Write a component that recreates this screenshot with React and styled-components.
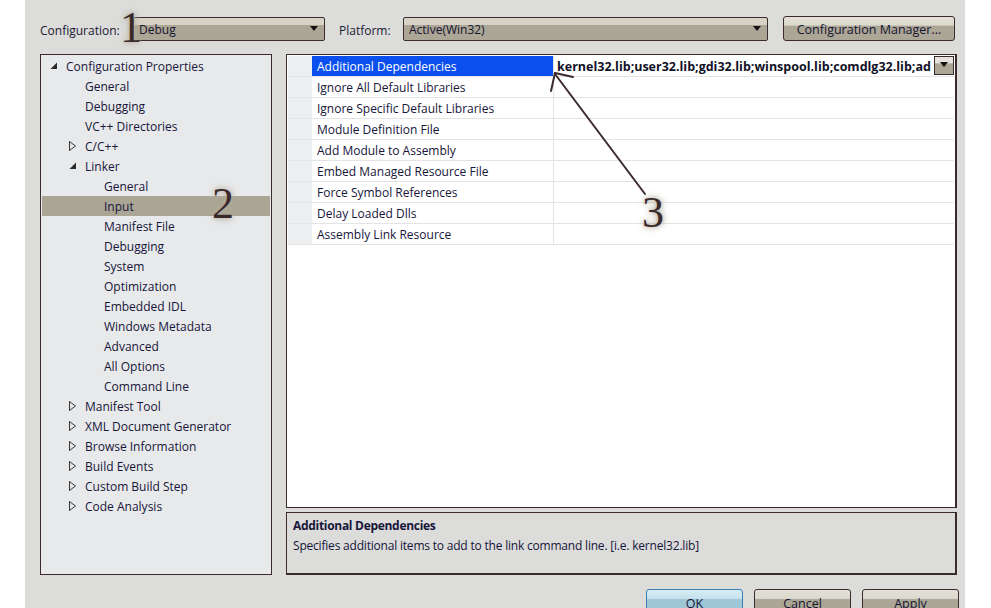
import React from 'react';
import styled, { createGlobalStyle } from 'styled-components';

const GlobalStyle = createGlobalStyle`
  html, body {
    margin: 0;
    padding: 0;
    background: #ffffff;
  }
  body {
    font-family: 'Open Sans', 'Noto Sans', sans-serif;
    font-size: 12px;
    color: #14143a;
  }
`;

const DARK = '#3b2a2e';

const Window = styled.div`
  position: relative;
  margin-left: 25px;
  width: 940px;
  height: 608px;
  overflow: hidden;
  background: #dcdcda;
  display: flex;
  flex-direction: column;
  padding: 16px 8px 0 15px;
  box-sizing: border-box;
  & > * {
    flex-shrink: 0;
  }
`;

const TopBar = styled.div`
  display: flex;
  align-items: center;
  height: 25px;
`;

const Label = styled.span`
  width: ${(p) => p.w}px;
  padding-top: 3px;
  color: #1a1a33;
  white-space: nowrap;
`;

const Combo = styled.div`
  width: ${(p) => p.w}px;
  height: 24px;
  box-sizing: border-box;
  border: 1px solid ${DARK};
  border-radius: 2px;
  background: linear-gradient(#d6d2c6 0%, #d6d2c6 30%, #aca696 32%, #aca696 100%);
  display: flex;
  align-items: center;
  padding: 0 6px 0 5px;
  margin-right: ${(p) => p.mr || 0}px;
  span {
    flex: 1;
    padding-top: 2px;
    color: #151530;
  }
`;

const DownArrow = styled.i`
  width: 0;
  height: 0;
  border-left: 4px solid transparent;
  border-right: 4px solid transparent;
  border-top: 5px solid #111;
`;

const Button = styled.div`
  width: ${(p) => p.w}px;
  height: ${(p) => p.h || 25}px;
  box-sizing: border-box;
  border: 1px solid ${(p) => (p.primary ? '#3c7fb1' : DARK)};
  border-radius: 3px;
  background: ${(p) =>
    p.primary
      ? 'linear-gradient(#d5ecf4 0%, #c6e2ec 35%, #9ec6d4 40%, #9ec6d4 100%)'
      : 'linear-gradient(#e2dfd6 0%, #dcd9cf 35%, #aca696 40%, #aca696 100%)'};
  display: flex;
  align-items: center;
  justify-content: center;
  padding-top: 2px;
  color: #151530;
  font-size: 12.5px;
`;

const Main = styled.div`
  display: flex;
  gap: 14px;
  margin-top: 13px;
  height: 521px;
`;

const TreePanel = styled.div`
  width: 232px;
  flex-shrink: 0;
  box-sizing: border-box;
  border: 1px solid ${DARK};
  background: #e8e9eb;
  padding-top: 1px;
`;

const TreeRow = styled.div`
  position: relative;
  height: 20px;
  margin: 0 1px;
  display: flex;
  align-items: center;
  padding-left: ${(p) => 24 + p.level * 19}px;
  background: ${(p) => (p.selected ? '#aaa594' : 'transparent')};
  color: #16163a;
  white-space: nowrap;
`;

const Toggle = styled.svg`
  position: absolute;
  left: ${(p) => 8 + p.level * 19}px;
  top: ${(p) => (p.open ? 6 : 5)}px;
`;

const RightCol = styled.div`
  flex: 1;
  min-width: 0;
  display: flex;
  flex-direction: column;
  gap: 4px;
`;

const Grid = styled.div`
  height: 454px;
  flex-shrink: 0;
  box-sizing: border-box;
  border: 1px solid ${DARK};
  border-right-width: 2px;
  background: #ffffff;
  padding: 1px 1px 0 1px;
`;

const GridRow = styled.div`
  display: flex;
  height: 21px;
  box-sizing: border-box;
  border-bottom: 1px solid #e4e4e4;
`;

const Gutter = styled.div`
  width: 24px;
  background: #eceef0;
`;

const NameCell = styled.div`
  width: 241px;
  box-sizing: border-box;
  padding-left: 5px;
  display: flex;
  align-items: center;
  background: ${(p) => (p.active ? '#0b50ef' : 'transparent')};
  color: ${(p) => (p.active ? '#ffffff' : '#16163a')};
  white-space: nowrap;
`;

const ValueCell = styled.div`
  flex: 1;
  border-left: 1px solid #e4e4e4;
  display: flex;
  align-items: center;
  padding-left: 3px;
  min-width: 0;
  span {
    flex: 1;
    overflow: hidden;
    white-space: nowrap;
    font-weight: 700;
    font-size: 12.5px;
    color: #111126;
    letter-spacing: 0;
  }
`;

const CellDrop = styled.div`
  width: 20px;
  height: 19px;
  flex-shrink: 0;
  box-sizing: border-box;
  border: 1px solid ${DARK};
  background: linear-gradient(#e6e3da 0%, #e6e3da 35%, #aca696 40%);
  display: flex;
  align-items: flex-start;
  justify-content: center;
  padding-top: 5px;
  margin-top: -1px;
`;

const Description = styled.div`
  flex: 1;
  box-sizing: border-box;
  border: 1px solid ${DARK};
  border-bottom-width: 2px;
  border-right-width: 2px;
  padding: 4px 6px;
  color: #16163a;
  h4 {
    margin: 0 0 3px;
    font-size: 12px;
    font-weight: 700;
    letter-spacing: -0.3px;
  }
  p {
    margin: 0;
    letter-spacing: -0.2px;
  }
`;

const ButtonRow = styled.div`
  display: flex;
  justify-content: flex-end;
  gap: 11px;
  margin-top: 14px;
  margin-right: -2px;
`;

const Marker = styled.div`
  position: absolute;
  left: ${(p) => p.x}px;
  top: ${(p) => p.y}px;
  font-family: 'Liberation Serif', 'DejaVu Serif', serif;
  font-size: 44px;
  line-height: 1;
  color: #3a2a2c;
  text-shadow: 0 0 4px #b3ad9b, 0 0 8px #b3ad9b;
  pointer-events: none;
`;

const Overlay = styled.svg`
  position: absolute;
  left: 0;
  top: 0;
  pointer-events: none;
`;

const tree = [
  { label: 'Configuration Properties', level: 0, toggle: 'open' },
  { label: 'General', level: 1 },
  { label: 'Debugging', level: 1 },
  { label: 'VC++ Directories', level: 1 },
  { label: 'C/C++', level: 1, toggle: 'closed' },
  { label: 'Linker', level: 1, toggle: 'open' },
  { label: 'General', level: 2 },
  { label: 'Input', level: 2, selected: true },
  { label: 'Manifest File', level: 2 },
  { label: 'Debugging', level: 2 },
  { label: 'System', level: 2 },
  { label: 'Optimization', level: 2 },
  { label: 'Embedded IDL', level: 2 },
  { label: 'Windows Metadata', level: 2 },
  { label: 'Advanced', level: 2 },
  { label: 'All Options', level: 2 },
  { label: 'Command Line', level: 2 },
  { label: 'Manifest Tool', level: 1, toggle: 'closed' },
  { label: 'XML Document Generator', level: 1, toggle: 'closed' },
  { label: 'Browse Information', level: 1, toggle: 'closed' },
  { label: 'Build Events', level: 1, toggle: 'closed' },
  { label: 'Custom Build Step', level: 1, toggle: 'closed' },
  { label: 'Code Analysis', level: 1, toggle: 'closed' },
];

const props = [
  'Additional Dependencies',
  'Ignore All Default Libraries',
  'Ignore Specific Default Libraries',
  'Module Definition File',
  'Add Module to Assembly',
  'Embed Managed Resource File',
  'Force Symbol References',
  'Delay Loaded Dlls',
  'Assembly Link Resource',
];

function TreeToggle({ type, level }) {
  if (type === 'open') {
    return (
      <Toggle open level={level} width="8" height="8" viewBox="0 0 8 8">
        <polygon points="7,0.5 7,7 0.5,7" fill="#2a2a2a" />
      </Toggle>
    );
  }
  return (
    <Toggle level={level} width="8" height="10" viewBox="0 0 8 10">
      <polygon points="0.5,0.5 6.5,5 0.5,9.5" fill="none" stroke="#333" strokeWidth="1" />
    </Toggle>
  );
}

export default function App() {
  return (
    <>
      <GlobalStyle />
      <Window>
        <TopBar>
          <Label w={93}>Configuration:</Label>
          <Combo w={192} mr={14}>
            <span>Debug</span>
            <DownArrow />
          </Combo>
          <Label w={64}>Platform:</Label>
          <Combo w={365} mr={15}>
            <span>Active(Win32)</span>
            <DownArrow />
          </Combo>
          <Button w={172}>Configuration Manager...</Button>
        </TopBar>

        <Main>
          <TreePanel>
            {tree.map((t, i) => (
              <TreeRow key={i} level={t.level} selected={t.selected}>
                {t.toggle && <TreeToggle type={t.toggle} level={t.level} />}
                {t.label}
              </TreeRow>
            ))}
          </TreePanel>

          <RightCol>
            <Grid>
              {props.map((p, i) => (
                <GridRow key={p}>
                  <Gutter />
                  <NameCell active={i === 0}>{p}</NameCell>
                  <ValueCell>
                    {i === 0 && (
                      <>
                        <span>kernel32.lib;user32.lib;gdi32.lib;winspool.lib;comdlg32.lib;ad</span>
                        <CellDrop>
                          <DownArrow />
                        </CellDrop>
                      </>
                    )}
                  </ValueCell>
                </GridRow>
              ))}
            </Grid>
            <Description>
              <h4>Additional Dependencies</h4>
              <p>Specifies additional items to add to the link command line. [i.e. kernel32.lib]</p>
            </Description>
          </RightCol>
        </Main>

        <ButtonRow>
          <Button w={97} h={26} primary>OK</Button>
          <Button w={97} h={26}>Cancel</Button>
          <Button w={97} h={26}>Apply</Button>
        </ButtonRow>

        <Overlay width="940" height="608" viewBox="0 0 940 608">
          <g stroke="#3a2a2c" strokeWidth="2" fill="none" strokeLinecap="round">
            <line x1="620" y1="194" x2="530" y2="74" />
            <line x1="530" y1="73" x2="548" y2="77" />
            <line x1="530" y1="73" x2="526" y2="91" />
          </g>
        </Overlay>
        <Marker x={95} y={6}>1</Marker>
        <Marker x={187} y={182}>2</Marker>
        <Marker x={617} y={191}>3</Marker>
      </Window>
    </>
  );
}
